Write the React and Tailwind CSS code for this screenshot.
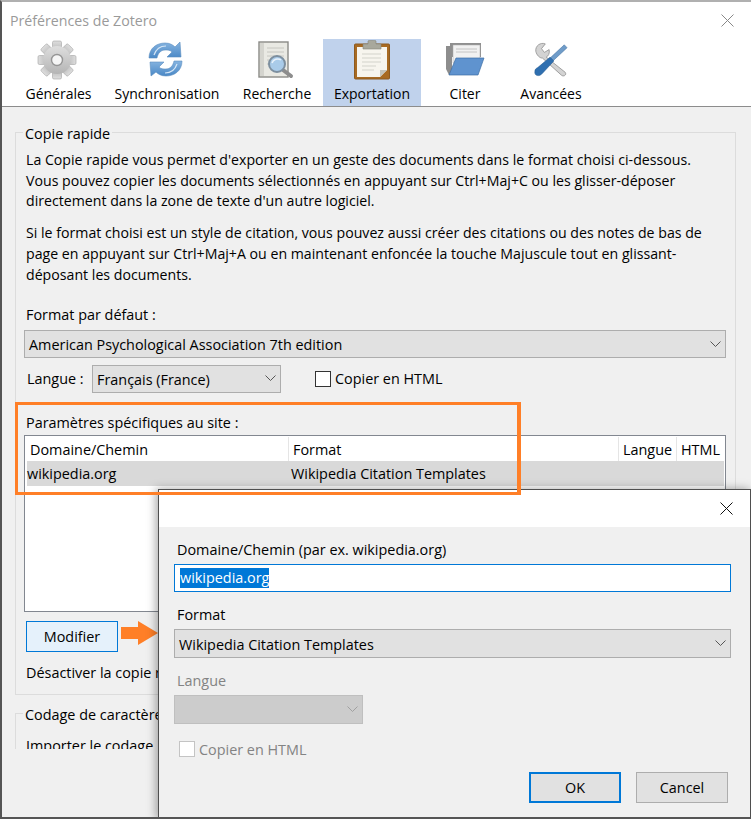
const font = { fontFamily: '"Open Sans", "Noto Sans", sans-serif' };

function Chevron({ color = "#555" }) {
  return (
    <svg width="11" height="7" viewBox="0 0 11 7" fill="none">
      <path d="M0.5 0.5 L5.5 5.5 L10.5 0.5" stroke={color} strokeWidth="1" />
    </svg>
  );
}

function GearIcon() {
  const teeth = [0, 45, 90, 135, 180, 225, 270, 315];
  return (
    <svg width="40" height="40" viewBox="0 0 40 40">
      <defs>
        <linearGradient id="gear" x1="0" y1="0" x2="0" y2="1">
          <stop offset="0" stopColor="#dedede" />
          <stop offset="1" stopColor="#b4b4b4" />
        </linearGradient>
      </defs>
      {teeth.map((a) => (
        <rect key={a} x="15.5" y="1" width="9" height="10" rx="1.5" fill="url(#gear)" stroke="#a3a3a3" strokeWidth="0.6" transform={`rotate(${a} 20 20)`} />
      ))}
      <circle cx="20" cy="20" r="14" fill="url(#gear)" />
      <circle cx="20" cy="20" r="5.5" fill="#f6f6f6" stroke="#959595" strokeWidth="1.4" />
    </svg>
  );
}

function SyncIcon() {
  return (
    <svg width="36" height="40" viewBox="0 0 36 40">
      <defs>
        <linearGradient id="sync" x1="0" y1="0" x2="0" y2="1">
          <stop offset="0" stopColor="#86b4e0" />
          <stop offset="1" stopColor="#4a88c6" />
        </linearGradient>
      </defs>
      <path d="M1 18 C1 8 9 3 17 3 C22 3 25 5 27 7 L32 2 L33 17 L19 17 L24 12 C22 10 20 10 17 10 C13 10 10 13 9 18 Z" fill="url(#sync)" stroke="#5a8dc0" strokeWidth="0.6" />
      <path d="M34 21 C34 31 26 36 18 36 C13 36 10 34 8 32 L3 36 L2 22 L16 22 L11 27 C13 29 15 29 18 29 C22 29 25 26 26 21 Z" fill="url(#sync)" stroke="#5a8dc0" strokeWidth="0.6" />
      <path d="M6 15 C8 9 12 6 18 6" stroke="#d5e6f6" strokeWidth="1.2" fill="none" />
      <path d="M29 24 C27 30 23 33 17 33" stroke="#d5e6f6" strokeWidth="1.2" fill="none" />
    </svg>
  );
}

function SearchDocIcon() {
  return (
    <svg width="36" height="38" viewBox="0 0 36 38">
      <rect x="1" y="1" width="29" height="35" fill="#e9e9e3" stroke="#8a8a86" strokeWidth="1.4" />
      <rect x="2" y="2" width="4" height="33" fill="#d4d4ce" />
      <g stroke="#c6c6c0" strokeWidth="1">
        <path d="M9 7 H26 M9 11 H26 M9 15 H26 M9 19 H13 M9 23 H11" />
      </g>
      <path d="M25 29 L33 35" stroke="#8d8d8d" strokeWidth="4" strokeLinecap="round" />
      <circle cx="19" cy="23" r="8" fill="#a9cbe9" stroke="#7d8f9f" strokeWidth="2" />
      <path d="M14 22 A6 6 0 0 1 23 19" stroke="#e8f2fb" strokeWidth="1.5" fill="none" />
    </svg>
  );
}

function ClipboardIcon() {
  return (
    <svg width="36" height="40" viewBox="0 0 36 40">
      <rect x="0.5" y="4" width="35" height="35" rx="1" fill="#a86a22" stroke="#8c5a20" strokeWidth="1" />
      <path d="M3 7 H33 V30 L26 37 H3 Z" fill="#f7f5ee" />
      <path d="M26 37 L26 30 H33 Z" fill="#c4c4bc" />
      <g stroke="#d3d3cb" strokeWidth="1">
        <path d="M8 14 H27 M8 18 H27 M8 22 H27 M8 26 H22 M8 30 H20" />
      </g>
      <path d="M9 9 V4 H14 V1 C14 0 22 0 22 1 V4 H27 V9 Z" fill="#a8a89c" stroke="#85857a" strokeWidth="0.6" />
    </svg>
  );
}

function FolderIcon() {
  return (
    <svg width="40" height="34" viewBox="0 0 40 34">
      <path d="M1 3 H7 V32 H4 L1 26 Z" fill="#8d8d8d" />
      <path d="M5 0 H36 V14 H5 Z" fill="#8f8f8f" />
      <path d="M8 2 H35 V20 H8 Z" fill="#f1f1f1" stroke="#aaa" strokeWidth="0.5" />
      <path d="M11 6 H32 M11 9 H32" stroke="#c4c4c4" />
      <path d="M11 15 H39 L33 32 H4 Z" fill="#5f93cf" stroke="#3e6ea5" strokeWidth="0.7" />
    </svg>
  );
}

function ToolsIcon() {
  return (
    <svg width="36" height="36" viewBox="0 0 38 38">
      <path d="M3 10 C2 4 8 0 13 2 L9 7 L12 11 L17 8 C18 12 16 15 14 16 L34 32 C36 35 32 37 30 35 L10 17 C7 17 4 14 3 10 Z" fill="#d3d3d3" stroke="#8b8b8b" strokeWidth="0.8" />
      <path d="M33 3 L36 6 L21 20 L18 17 Z" fill="#6f9cc9" stroke="#4a76a5" strokeWidth="0.6" />
      <path d="M18 16 L22 20 L10 33 C7 37 1 36 2 31 C2 29 3 28 5 27 Z" fill="#2f6fb0" stroke="#245a92" strokeWidth="0.6" />
    </svg>
  );
}

const tabs = [
  { label: "Générales", icon: <GearIcon />, cls: "ml-[10px] w-[97px]", iconCls: "-ml-[3px]" },
  { label: "Synchronisation", icon: <SyncIcon />, cls: "w-[120px]", iconCls: "-ml-[2px]" },
  { label: "Recherche", icon: <SearchDocIcon />, cls: "w-[96px] pl-[4px]", iconCls: "-ml-[2px]" },
  { label: "Exportation", icon: <ClipboardIcon />, cls: "w-[98px] bg-[#c0d2ec]" },
  { label: "Citer", icon: <FolderIcon />, cls: "w-[88px]" },
  { label: "Avancées", icon: <ToolsIcon />, cls: "w-[84px]" },
];

function Toolbar() {
  return (
    <div className="flex h-[68px] border-b border-[#8c8c8c] bg-white">
      {tabs.map((t) => (
        <div key={t.label} className={`flex h-[67px] flex-col items-center ${t.cls}`}>
          <div className={`flex h-[42px] items-center justify-center ${t.iconCls || ""}`}>{t.icon}</div>
          <div className="mt-[3px] text-[14px] leading-[20px] text-black">{t.label}</div>
        </div>
      ))}
    </div>
  );
}

function Select({ children, className = "" }) {
  return (
    <div className={`flex items-center justify-between border border-[#adadad] bg-[#e1e1e1] pl-[4px] pr-[4px] ${className}`}>
      <span className="whitespace-nowrap pt-[2px] text-black">{children}</span>
      <Chevron />
    </div>
  );
}

function PrefsBody() {
  return (
    <div className="pl-[15px] pr-[16px] pt-[14px]">
      <fieldset className="h-[574px] border border-[#dcdcdc] px-[9px]">
        <legend className="-ml-[2px] px-[2px] pt-[3px] leading-[20px]">Copie rapide</legend>
        <div className="ml-[1px] mt-[6px] text-[14.17px] leading-[20.7px]">
          <p className="whitespace-nowrap">La Copie rapide vous permet d'exporter en un geste des documents dans le format choisi ci-dessous.</p>
          <p className="whitespace-nowrap">Vous pouvez copier les documents sélectionnés en appuyant sur Ctrl+Maj+C ou les glisser-déposer</p>
          <p className="whitespace-nowrap">directement dans la zone de texte d'un autre logiciel.</p>
          <p className="mt-[11px] whitespace-nowrap">Si le format choisi est un style de citation, vous pouvez aussi créer des citations ou des notes de bas de</p>
          <p className="whitespace-nowrap">page en appuyant sur Ctrl+Maj+A ou en maintenant enfoncée la touche Majuscule tout en glissant-</p>
          <p className="whitespace-nowrap">déposant les documents.</p>
        </div>
        <div className="ml-[1px] mt-[20px] leading-[20px]">Format par défaut :</div>
        <Select className="-ml-[1px] mt-[5px] h-[28px] w-[702px]">American Psychological Association 7th edition</Select>
        <div className="mt-[6px] flex h-[29px] items-center">
          <span className="ml-[2px] w-[65px]">Langue :</span>
          <Select className="h-[28px] w-[189px]">Français (France)</Select>
          <span className="ml-[34px] h-[16px] w-[16px] border border-[#333] bg-white" />
          <span className="ml-[4px]">Copier en HTML</span>
        </div>
        <div className="ml-[1px] mt-[20px] leading-[20px]">Paramètres spécifiques au site :</div>
        <div className="-ml-[1px] mt-[2px] h-[177px] w-[702px] border border-[#828790] bg-white p-px">
          <div className="flex h-[24px] items-center">
            <div className="h-full w-[263px] border-r border-[#e5e5e5] pl-[4px] leading-[26px]">Domaine/Chemin</div>
            <div className="h-full w-[330px] border-r border-[#e5e5e5] pl-[4px] leading-[26px]">Format</div>
            <div className="h-full w-[58px] border-r border-[#e5e5e5] pl-[4px] leading-[26px]">Langue</div>
            <div className="h-full pl-[4px] leading-[26px]">HTML</div>
          </div>
          <div className="ml-px flex h-[25px] items-center bg-[#d9d9d9]">
            <div className="w-[264px]">wikipedia.org</div>
            <div>Wikipedia Citation Templates</div>
          </div>
        </div>
        <button className="ml-[1px] mt-[9px] block h-[31px] w-[92px] border border-[#0078d7] bg-[#e5f1fb] text-center">Modifier</button>
        <div className="ml-[1px] mt-[11px] leading-[20px]">Désactiver la copie rapide</div>
      </fieldset>
      <div className="mt-[7px] h-[47px] overflow-hidden">
        <fieldset className="h-[60px] border-l border-t border-[#dcdcdc] px-[10px]">
          <legend className="-ml-[3px] px-[2px] pt-[3px] leading-[20px]">Codage de caractères</legend>
          <div className="mt-[10px]">Importer le codage</div>
        </fieldset>
      </div>
    </div>
  );
}

function EditDialog() {
  return (
    <div className="absolute left-[158px] top-[489px] h-[330px] w-[593px] border border-[#4f4f4f] bg-[#f0f0f0] shadow-[-2px_0_9px_rgba(0,0,0,0.35)]">
      <div className="flex h-[37px] items-center justify-end bg-white pr-[17px]">
        <svg width="13" height="13" viewBox="0 0 13 13" fill="none">
          <path d="M0.5 0.5 L12.5 12.5 M12.5 0.5 L0.5 12.5" stroke="#111" strokeWidth="1" />
        </svg>
      </div>
      <div className="pl-[15px]">
        <div className="ml-[3px] mt-[13px] leading-[20px]">Domaine/Chemin (par ex. wikipedia.org)</div>
        <div className="mt-[4px] flex h-[28px] w-[557px] items-center border border-[#0078d7] bg-white pl-[5px]">
          <span className="bg-[#0078d7] leading-[20px] text-white">wikipedia.org</span>
        </div>
        <div className="ml-[3px] mt-[13px] leading-[20px]">Format</div>
        <Select className="mt-[4px] h-[29px] w-[557px]">Wikipedia Citation Templates</Select>
        <div className="ml-[3px] mt-[13px] leading-[20px] text-[#838383]">Langue</div>
        <div className="mt-[4px] flex h-[29px] w-[189px] items-center justify-end border border-[#bfbfbf] bg-[#cccccc] pr-[4px]">
          <Chevron color="#a0a0a0" />
        </div>
        <div className="mt-[17px] flex h-[16px] items-center">
          <span className="ml-[5px] h-[16px] w-[16px] border border-[#c4c4c4] bg-white" />
          <span className="ml-[4px] pt-[2px] text-[#838383]">Copier en HTML</span>
        </div>
        <div className="mt-[15px] flex pl-[355px]">
          <button className="h-[31px] w-[92px] border-2 border-[#0078d7] bg-[#e1e1e1]">OK</button>
          <button className="ml-[15px] h-[31px] w-[92px] border border-[#adadad] bg-[#e1e1e1]">Cancel</button>
        </div>
      </div>
    </div>
  );
}

export default function App() {
  return (
    <div
      className="relative h-[819px] w-[751px] overflow-hidden border-b-2 border-l-2 border-t-2 border-b-[#555] border-l-[#555] border-t-[#b0b0b0] bg-[#f0f0f0] text-[14.4px] text-black"
      style={font}
    >
      <div className="-ml-[2px]">
        <div className="flex h-[37px] items-center justify-between bg-white pl-[10px] pr-[17px]">
          <span className="text-[14.2px] text-[#9a9a9a]">Préférences de Zotero</span>
          <svg width="13" height="13" viewBox="0 0 13 13" fill="none">
            <path d="M0.5 0.5 L12.5 12.5 M12.5 0.5 L0.5 12.5" stroke="#888" strokeWidth="1" />
          </svg>
        </div>
        <Toolbar />
        <PrefsBody />
      </div>
      <svg className="absolute left-[119px] top-[619px]" width="37" height="24" viewBox="0 0 37 24">
        <path d="M0 6 H17 V0 L37 12 L17 24 V18 H0 Z" fill="#ff7f27" />
      </svg>
      <div className="absolute -left-[2px] -top-[2px]">
        <EditDialog />
      </div>
      <div className="absolute left-[13px] top-[400px] h-[93px] w-[506px] border-[3px] border-r-4 border-[#ff7f27]" />
    </div>
  );
}
